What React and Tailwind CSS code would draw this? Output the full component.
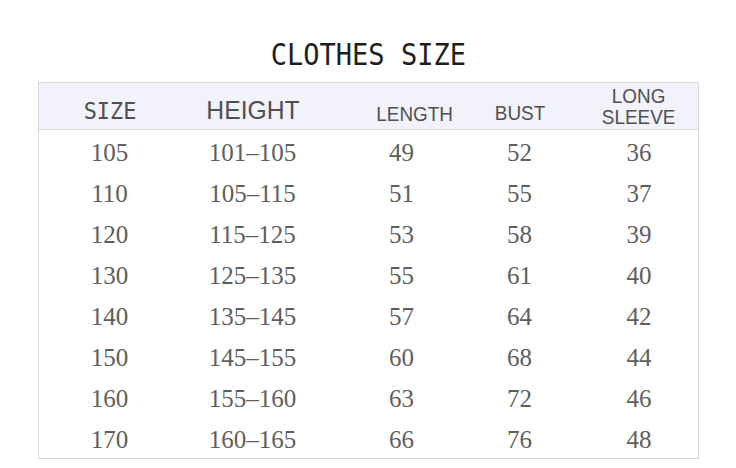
import React from "react";

const rows = [
  ["105", "101–105", "49", "52", "36"],
  ["110", "105–115", "51", "55", "37"],
  ["120", "115–125", "53", "58", "39"],
  ["130", "125–135", "55", "61", "40"],
  ["140", "135–145", "57", "64", "42"],
  ["150", "145–155", "60", "68", "44"],
  ["160", "155–160", "63", "72", "46"],
  ["170", "160–165", "66", "76", "48"],
];

const mono = { fontFamily: '"DejaVu Sans Mono", monospace' };

const App = () => {
  return (
    <div className="w-[736px] h-[468px] bg-white flex flex-col items-center overflow-hidden">
      {/* Title */}
      <h1
        className="mt-[37px] h-[40px] text-[30px] leading-[36px] text-[#1e1e1e] scale-x-90"
        style={mono}
      >
        CLOTHES SIZE
      </h1>

      {/* Table */}
      <div className="mt-[5px] w-[661px] border border-[#d9d9d9] font-['Liberation_Serif',serif] text-[#5e5e5e]">
        {/* Header */}
        <div className="h-[47px] bg-[#f2f2fa] border-b border-[#d9d9d9] grid grid-cols-[142px_144px_154px_82px_139px] items-center text-[#505050]">
          <div className="text-center pt-[10px] text-[23px] scale-x-95" style={mono}>
            SIZE
          </div>
          <div className="text-center pt-[8px] text-[26px] font-['Liberation_Sans',sans-serif] scale-x-95">
            HEIGHT
          </div>
          <div className="text-center pl-[28px] pt-[14px] text-[21px] font-['Liberation_Sans',sans-serif] scale-x-90">
            LENGTH
          </div>
          <div className="text-center pt-[12px] text-[21px] font-['Liberation_Sans',sans-serif] scale-x-90">
            BUST
          </div>
          <div className="text-center pl-[18px] -mt-[2px] text-[21px] leading-[21px] font-['Liberation_Sans',sans-serif] scale-x-90">
            LONG
            <br />
            SLEEVE
          </div>
        </div>

        {/* Rows */}
        {rows.map((r, i) => (
          <div
            key={i}
            className="h-[41px] pt-[4px] grid grid-cols-[142px_144px_154px_82px_139px] items-center text-[25px] leading-none"
          >
            <div className="text-center">{r[0]}</div>
            <div className="text-center">{r[1]}</div>
            <div className="text-center">{r[2]}</div>
            <div className="text-center">{r[3]}</div>
            <div className="text-center pl-[18px]">{r[4]}</div>
          </div>
        ))}
      </div>
    </div>
  );
};

export default App;
